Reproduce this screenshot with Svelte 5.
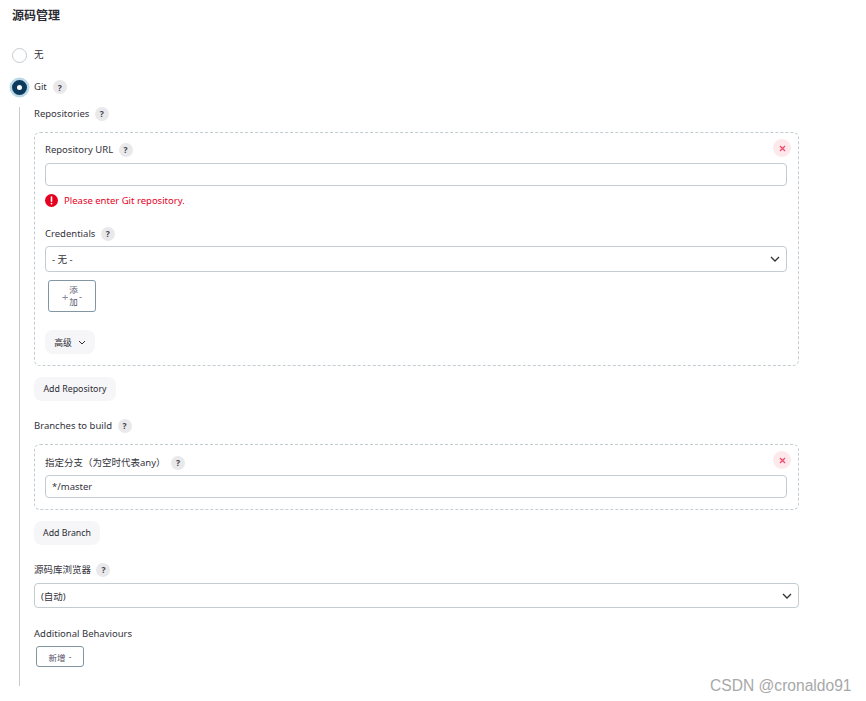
<script>
	const help = '?';
</script>

<div class="page">
	<h2 class="title">源码管理</h2>

	<div class="radio-row first">
		<span class="radio"></span>
		<span class="text">无</span>
	</div>
	<div class="radio-row second">
		<span class="radio checked"></span>
		<span class="text">Git</span>
		<span class="help">{help}</span>
	</div>

	<div class="nested">
		<div class="label top">Repositories <span class="help">{help}</span></div>

		<div class="chunk repo">
			<button class="close" aria-label="remove">
				<svg width="7" height="7" viewBox="0 0 7 7"><path d="M1 1l5 5M6 1L1 6" stroke="#f0476b" stroke-width="1.3" /></svg>
			</button>
			<div class="label">Repository URL <span class="help">{help}</span></div>
			<div class="input url"></div>
			<div class="error">
				<svg width="13" height="13" viewBox="0 0 13 13">
					<circle cx="6.5" cy="6.5" r="6.5" fill="#e6001f" />
					<path d="M6.5 3v4.2" stroke="#fff" stroke-width="1.6" stroke-linecap="round" />
					<circle cx="6.5" cy="9.6" r="0.9" fill="#fff" />
				</svg>
				<span>Please enter Git repository.</span>
			</div>
			<div class="label cred">Credentials <span class="help">{help}</span></div>
			<div class="input select tall">
				<span>- 无 -</span>
				<svg class="chev" width="10" height="6" viewBox="0 0 10 6"><path d="M1 1l4 4 4-4" fill="none" stroke="#333" stroke-width="1.3" /></svg>
			</div>
			<button class="outline add-cred">
				<span class="plus">+</span>
				<span class="stack">添<br />加</span>
				<span class="caret">-</span>
			</button>
			<button class="soft advanced">
				高级
				<svg width="8" height="5" viewBox="0 0 8 5"><path d="M1 1l3 3 3-3" fill="none" stroke="#333" stroke-width="1" /></svg>
			</button>
		</div>

		<button class="soft add-repo">Add Repository</button>

		<div class="label branches">Branches to build <span class="help">{help}</span></div>

		<div class="chunk branch">
			<button class="close" aria-label="remove">
				<svg width="7" height="7" viewBox="0 0 7 7"><path d="M1 1l5 5M6 1L1 6" stroke="#f0476b" stroke-width="1.3" /></svg>
			</button>
			<div class="label">指定分支（为空时代表any） <span class="help">{help}</span></div>
			<div class="input value">*/master</div>
		</div>

		<button class="soft add-branch">Add Branch</button>

		<div class="label browser">源码库浏览器 <span class="help">{help}</span></div>
		<div class="input select auto">
			<span>(自动)</span>
			<svg class="chev" width="10" height="6" viewBox="0 0 10 6"><path d="M1 1l4 4 4-4" fill="none" stroke="#333" stroke-width="1.3" /></svg>
		</div>

		<div class="label behaviours">Additional Behaviours</div>
		<button class="outline add-new">新增 <span class="caret">-</span></button>
	</div>

	<div class="watermark">CSDN @cronaldo91</div>
</div>

<style>
	:global(body) {
		background: #fff;
	}
	.page {
		position: relative;
		width: 866px;
		height: 701px;
		box-sizing: border-box;
		padding: 8px 0 0 12px;
		overflow: hidden;
		font-family: "Noto Sans", "Noto Sans CJK SC", sans-serif;
		font-size: 9.5px;
		color: #33333b;
	}
	.title {
		margin: 0;
		font-size: 12px;
		line-height: 15px;
		font-weight: 700;
		color: #2b2b33;
	}
	.radio-row {
		display: flex;
		align-items: center;
		height: 16px;
	}
	.first {
		margin-top: 24px;
	}
	.second {
		margin-top: 16px;
	}
	.radio {
		width: 15px;
		height: 15px;
		box-sizing: border-box;
		border: 1.5px solid #c3ccd1;
		border-radius: 50%;
		background: #fff;
		margin-right: 7px;
		flex: none;
	}
	.checked {
		border: 5px solid #0b3a5e;
		box-shadow: 0 0 0 2.5px #bcd8e8;
	}
	.text {
		position: relative;
		top: -1px;
	}
	.help {
		display: inline-flex;
		align-items: center;
		justify-content: center;
		width: 14px;
		height: 14px;
		margin-left: 3px;
		border-radius: 50%;
		background: #e9e9eb;
		font-size: 8.5px;
		font-weight: 700;
		color: #44444c;
		vertical-align: middle;
	}
	.radio-row .help {
		margin-left: 6px;
	}
	.nested {
		margin: 12px 0 0 7px;
		padding-left: 14px;
		width: 765px;
		height: 579px;
		border-left: 1px solid #c3ccd1;
	}
	.label {
		height: 14px;
		line-height: 14px;
		white-space: nowrap;
	}
	.chunk {
		position: relative;
		box-sizing: border-box;
		width: 765px;
		border: 1px dashed #c3ccd1;
		border-radius: 6px;
		padding: 0 10px;
	}
	.repo {
		height: 234px;
		margin-top: 11px;
		padding-top: 10px;
	}
	.branch {
		height: 66px;
		margin-top: 11px;
		padding-top: 11px;
	}
	.close {
		position: absolute;
		top: 6px;
		right: 7px;
		width: 18px;
		height: 18px;
		padding: 0;
		border: none;
		border-radius: 50%;
		background: #fde8eb;
		display: flex;
		align-items: center;
		justify-content: center;
	}
	.input {
		box-sizing: border-box;
		width: 742px;
		border: 1px solid #c3ccd1;
		border-radius: 4px;
		background: #fff;
		display: flex;
		align-items: center;
		padding: 0 6px;
	}
	.url {
		height: 23px;
		margin-top: 6px;
	}
	.value {
		height: 23px;
		margin-top: 5px;
	}
	.select {
		justify-content: space-between;
		padding-right: 6px;
	}
	.tall {
		height: 26px;
		margin-top: 5px;
	}
	.auto {
		width: 765px;
		height: 25px;
		margin-top: 6px;
	}
	.error {
		display: flex;
		align-items: center;
		gap: 6px;
		margin-top: 8px;
		height: 13px;
		color: #e6001f;
	}
	.cred {
		margin-top: 20px;
	}
	button {
		font: inherit;
		color: inherit;
		display: block;
	}
	.outline {
		box-sizing: border-box;
		border: 1px solid #8296a3;
		border-radius: 3px;
		background: #fff;
		color: #55556a;
		display: flex;
		align-items: center;
		justify-content: center;
		padding: 0;
	}
	.add-cred {
		width: 48px;
		height: 32px;
		margin: 8px 0 0 3px;
		gap: 1px;
	}
	.stack {
		font-size: 8.5px;
		line-height: 12px;
	}
	.plus {
		color: #8a8a96;
		font-size: 11px;
	}
	.caret {
		color: #66667a;
	}
	.soft {
		border: none;
		border-radius: 8px;
		background: #f6f6f8;
		height: 24px;
		padding: 0;
		font-size: 8.8px;
		color: #2b2b33;
	}
	.advanced {
		width: 50px;
		margin-top: 18px;
		display: flex;
		align-items: center;
		justify-content: center;
		gap: 6px;
	}
	.add-repo {
		width: 82px;
		margin-top: 11px;
	}
	.branches {
		margin-top: 18px;
	}
	.add-branch {
		width: 66px;
		margin-top: 11px;
	}
	.browser {
		margin-top: 18px;
	}
	.behaviours {
		margin-top: 19px;
	}
	.add-new {
		width: 48px;
		height: 21px;
		margin: 5px 0 0 2px;
		gap: 3px;
		font-size: 8.5px;
	}
	.watermark {
		position: absolute;
		left: 710px;
		top: 677px;
		font-family: "Liberation Sans", sans-serif;
		font-size: 15.6px;
		line-height: 18px;
		color: #a8a8a8;
		white-space: nowrap;
	}
</style>
